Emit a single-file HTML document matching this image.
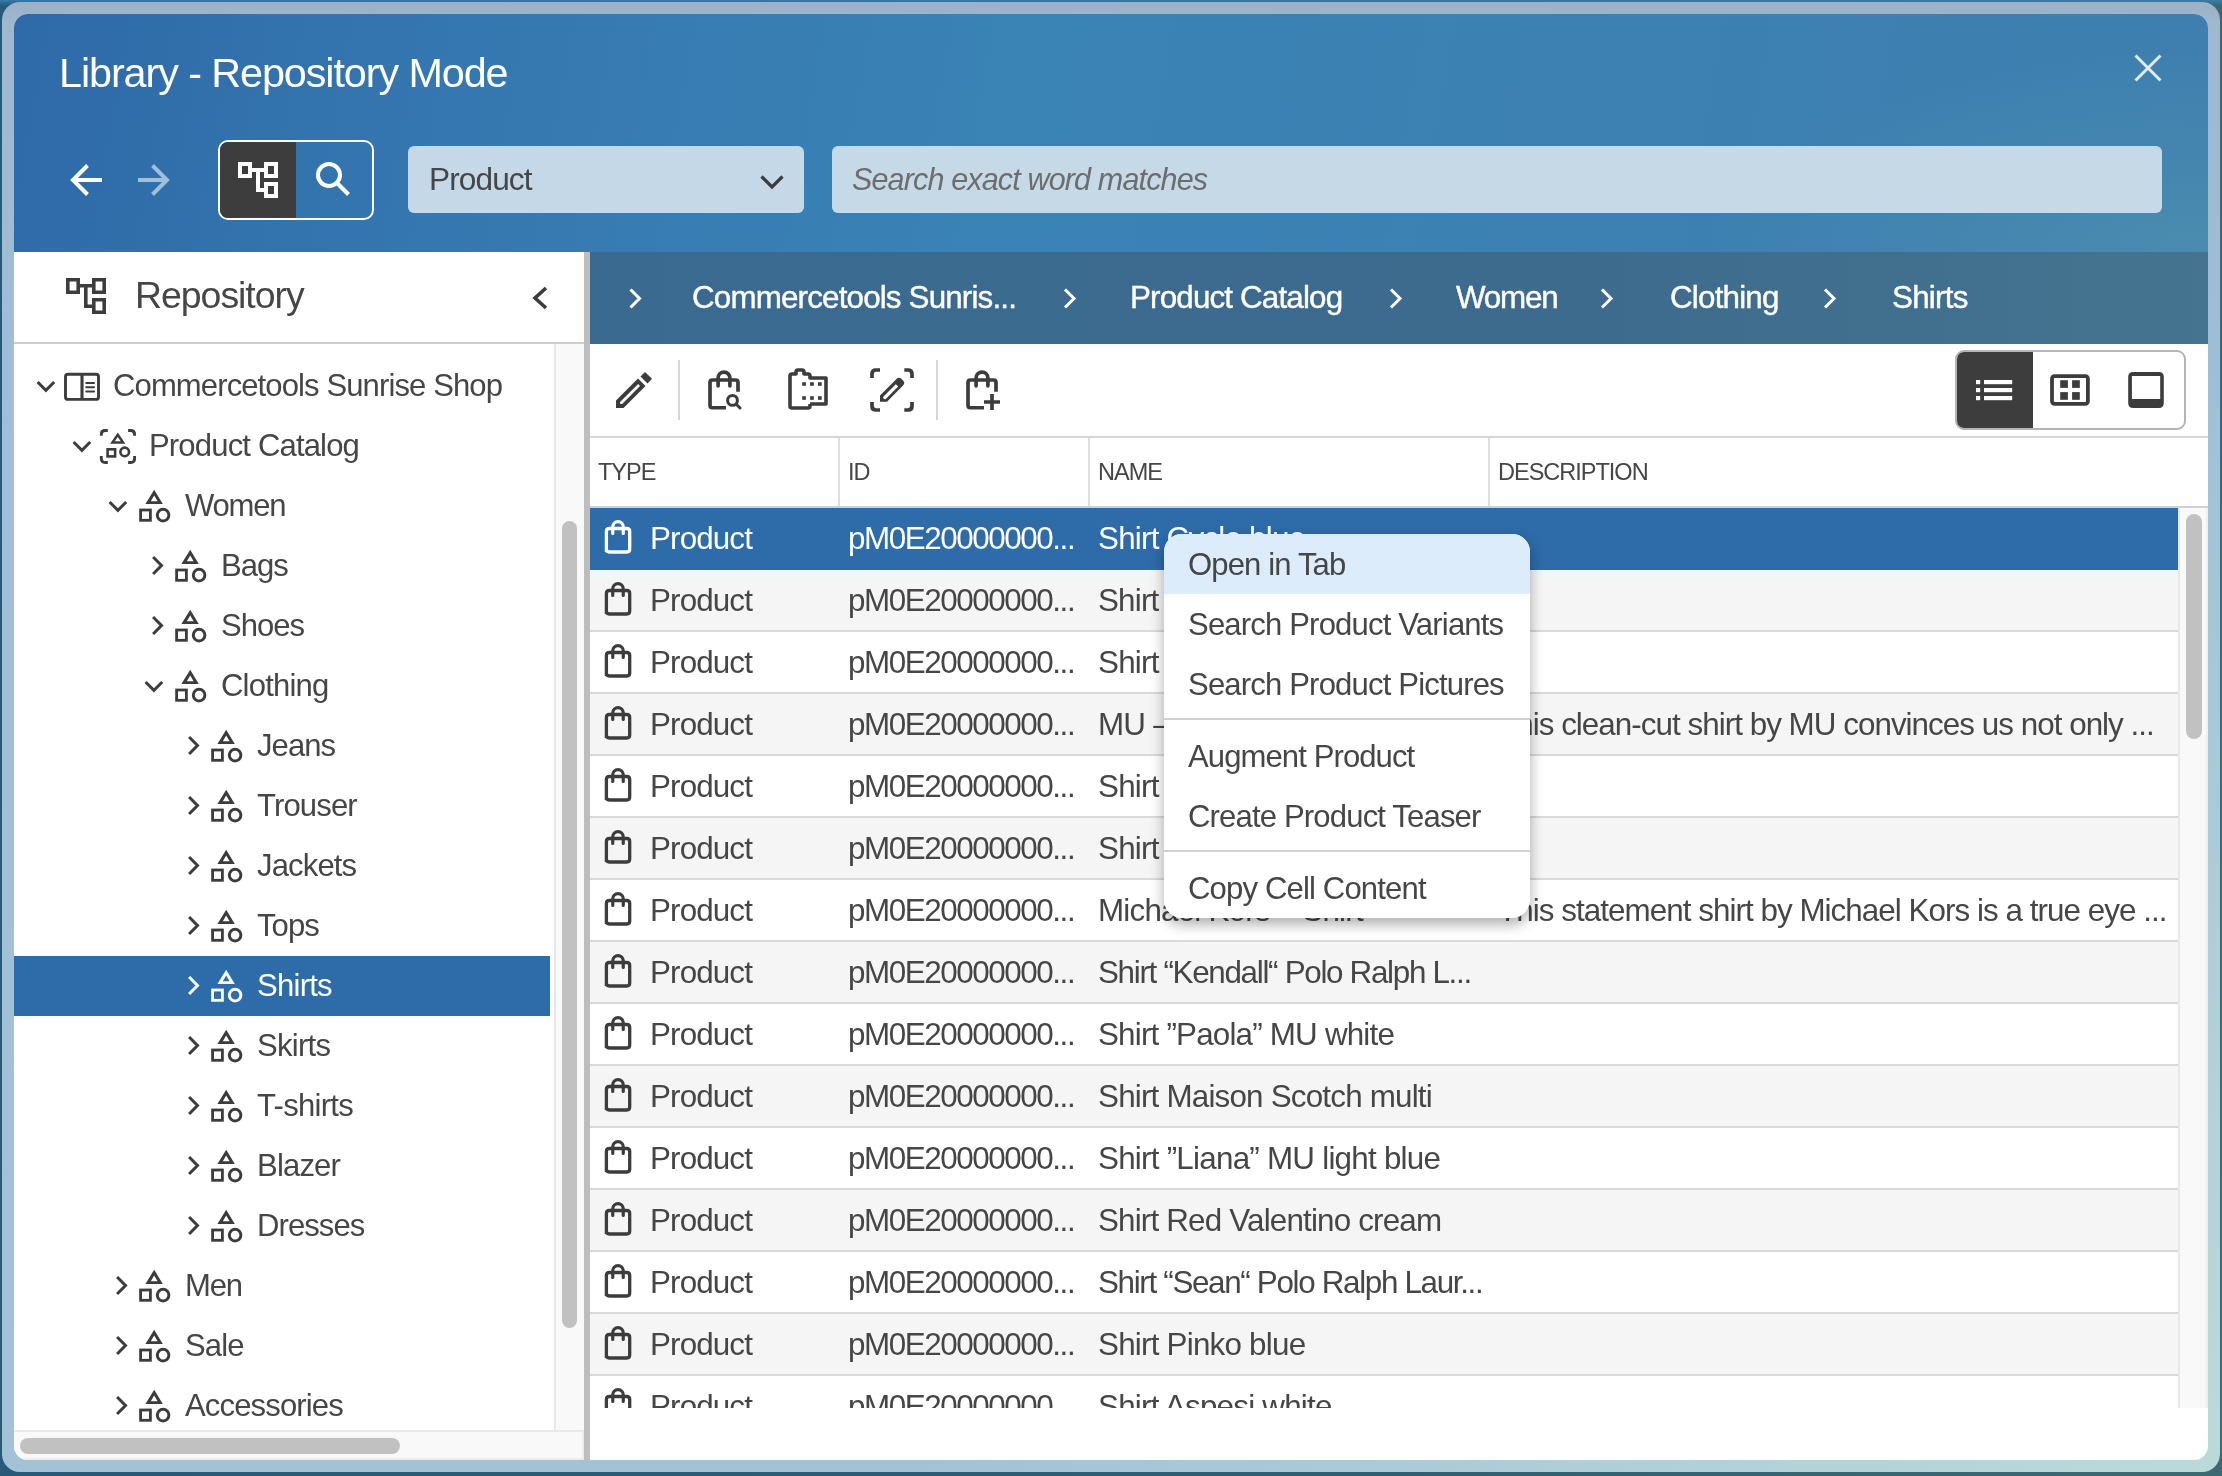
<!DOCTYPE html>
<html><head><meta charset="utf-8"><style>
*{margin:0;padding:0;box-sizing:border-box}
html,body{width:2222px;height:1476px;overflow:hidden}
body{position:relative;background:linear-gradient(180deg,rgba(60,125,175,0.9) 0px,rgba(60,125,175,0) 6px),linear-gradient(100deg,#28587a 0%,#2f5d72 60%,#3d6a72 100%);font-family:"Liberation Sans",sans-serif}
.t{position:absolute;white-space:nowrap;will-change:transform}
.box{position:absolute}
.ov{position:absolute;left:0;top:0;pointer-events:none}
#frame{position:absolute;left:2px;top:2px;width:2218px;height:1470px;border-radius:18px;background:linear-gradient(180deg,rgba(150,160,175,0.3) 0px,rgba(150,160,175,0) 20px),radial-gradient(ellipse 1300px 1100px at 100% 100%,rgba(186,218,218,1),rgba(186,218,218,0)),linear-gradient(180deg,#9db8cf 0%,#a0bfd6 30%,#a3c2d6 100%)}
#dlg{position:absolute;left:14px;top:14px;width:2194px;height:1446px;border-radius:14px;overflow:hidden;background:#fff}
#hdr{position:absolute;left:0;top:0;width:2194px;height:238px;background:radial-gradient(ellipse 500px 200px at 100% 100%,rgba(85,150,175,0.55),rgba(85,150,175,0) 100%),linear-gradient(100deg,#2e6aa8 0%,#3577b0 20%,#3a83b5 45%,#3c81b2 70%,#3e7faf 100%)}
</style></head><body>
<div id="frame"></div>
<div id="dlg">
 <div id="hdr"></div>
 <!-- left panel header border -->
 <div class="box" style="left:0;top:328px;width:570px;height:2px;background:#cfcfcf"></div>
 <!-- tree v scroll track -->
 <div class="box" style="left:540px;top:330px;width:30px;height:1086px;background:#f9f9f9;border-left:2px solid #e8e8e8"></div>
 <div class="box" style="left:548px;top:507px;width:15px;height:807px;background:#c1c1c1;border-radius:8px"></div>
 <!-- tree h scroll -->
 <div class="box" style="left:0;top:1416px;width:570px;height:30px;background:#f9f9f9;border-top:2px solid #e8e8e8;border-bottom:2px solid #ececec;border-right:2px solid #ececec"></div>
 <div class="box" style="left:6px;top:1424px;width:380px;height:16px;background:#c1c1c1;border-radius:8px"></div>
 <!-- splitter -->
 <div class="box" style="left:570px;top:238px;width:6px;height:1208px;background:#bdbdbd"></div>
 <!-- breadcrumb bar -->
 <div class="box" style="left:576px;top:238px;width:1618px;height:92px;background:linear-gradient(90deg,#3a6a90,#3d6b8e 60%,#44748f)"></div>
 <!-- toolbar bottom border -->
 <div class="box" style="left:576px;top:422px;width:1618px;height:2px;background:#d6d6d6"></div>
 <!-- table header -->
 <div class="box" style="left:576px;top:492px;width:1618px;height:2px;background:#d0d0d0"></div>
 <div class="box" style="left:824px;top:424px;width:2px;height:68px;background:#dedede"></div>
 <div class="box" style="left:1074px;top:424px;width:2px;height:68px;background:#dedede"></div>
 <div class="box" style="left:1474px;top:424px;width:2px;height:68px;background:#dedede"></div>
 <!-- table v scroll -->
 <div class="box" style="left:2164px;top:494px;width:30px;height:900px;background:#f9f9f9;border-left:2px solid #e8e8e8;border-right:2px solid #efefef"></div>
 <div class="box" style="left:2172px;top:500px;width:16px;height:225px;background:#c1c1c1;border-radius:8px"></div>
</div>
<div class="box" style="left:590px;top:508px;width:1588px;height:900px;overflow:hidden">
<div class="box" style="left:0;top:0px;width:1588px;height:62px;background:#2e6ba9;border-bottom:2px solid #2e6ba9"></div>
<div class="t " style="left:60px;top:14.84px;font-size:31.38px;line-height:31.38px;letter-spacing:-0.874px;color:#ffffff;">Product</div>
<div class="t " style="left:258px;top:14.84px;font-size:31.38px;line-height:31.38px;letter-spacing:-1.435px;color:#ffffff;">pM0E20000000...</div>
<div class="t " style="left:508px;top:14.84px;font-size:31.38px;line-height:31.38px;letter-spacing:-0.777px;color:#ffffff;">Shirt Cycle blue</div>
<div class="box" style="left:0;top:62px;width:1588px;height:62px;background:#f5f5f5;border-bottom:2px solid #d9d9d9"></div>
<div class="t " style="left:60px;top:76.84px;font-size:31.38px;line-height:31.38px;letter-spacing:-0.874px;color:#464646;">Product</div>
<div class="t " style="left:258px;top:76.84px;font-size:31.38px;line-height:31.38px;letter-spacing:-1.435px;color:#464646;">pM0E20000000...</div>
<div class="t " style="left:508px;top:76.84px;font-size:31.38px;line-height:31.38px;letter-spacing:-0.807px;color:#464646;">Shirt “Leonie” MU white</div>
<div class="box" style="left:0;top:124px;width:1588px;height:62px;background:#ffffff;border-bottom:2px solid #d9d9d9"></div>
<div class="t " style="left:60px;top:138.84px;font-size:31.38px;line-height:31.38px;letter-spacing:-0.874px;color:#464646;">Product</div>
<div class="t " style="left:258px;top:138.84px;font-size:31.38px;line-height:31.38px;letter-spacing:-1.435px;color:#464646;">pM0E20000000...</div>
<div class="t " style="left:508px;top:138.84px;font-size:31.38px;line-height:31.38px;letter-spacing:-0.790px;color:#464646;">Shirt “Selina” MU blue</div>
<div class="box" style="left:0;top:186px;width:1588px;height:62px;background:#f5f5f5;border-bottom:2px solid #d9d9d9"></div>
<div class="t " style="left:60px;top:200.84px;font-size:31.38px;line-height:31.38px;letter-spacing:-0.874px;color:#464646;">Product</div>
<div class="t " style="left:258px;top:200.84px;font-size:31.38px;line-height:31.38px;letter-spacing:-1.435px;color:#464646;">pM0E20000000...</div>
<div class="t " style="left:508px;top:200.84px;font-size:31.38px;line-height:31.38px;letter-spacing:-0.785px;color:#464646;">MU – Shirt “Ottavia”</div>
<div class="t " style="left:908px;top:200.84px;font-size:31.38px;line-height:31.38px;letter-spacing:-0.969px;color:#464646;">This clean-cut shirt by MU convinces us not only ...</div>
<div class="box" style="left:0;top:248px;width:1588px;height:62px;background:#ffffff;border-bottom:2px solid #d9d9d9"></div>
<div class="t " style="left:60px;top:262.84px;font-size:31.38px;line-height:31.38px;letter-spacing:-0.874px;color:#464646;">Product</div>
<div class="t " style="left:258px;top:262.84px;font-size:31.38px;line-height:31.38px;letter-spacing:-1.435px;color:#464646;">pM0E20000000...</div>
<div class="t " style="left:508px;top:262.84px;font-size:31.38px;line-height:31.38px;letter-spacing:-0.778px;color:#464646;">Shirt Seidensticker white</div>
<div class="box" style="left:0;top:310px;width:1588px;height:62px;background:#f5f5f5;border-bottom:2px solid #d9d9d9"></div>
<div class="t " style="left:60px;top:324.84px;font-size:31.38px;line-height:31.38px;letter-spacing:-0.874px;color:#464646;">Product</div>
<div class="t " style="left:258px;top:324.84px;font-size:31.38px;line-height:31.38px;letter-spacing:-1.435px;color:#464646;">pM0E20000000...</div>
<div class="t " style="left:508px;top:324.84px;font-size:31.38px;line-height:31.38px;letter-spacing:-0.792px;color:#464646;">Shirt Red Valentino white</div>
<div class="box" style="left:0;top:372px;width:1588px;height:62px;background:#ffffff;border-bottom:2px solid #d9d9d9"></div>
<div class="t " style="left:60px;top:386.84px;font-size:31.38px;line-height:31.38px;letter-spacing:-0.874px;color:#464646;">Product</div>
<div class="t " style="left:258px;top:386.84px;font-size:31.38px;line-height:31.38px;letter-spacing:-1.435px;color:#464646;">pM0E20000000...</div>
<div class="t " style="left:508px;top:386.84px;font-size:31.38px;line-height:31.38px;letter-spacing:-0.795px;color:#464646;">Michael Kors – Shirt</div>
<div class="t " style="left:908px;top:386.84px;font-size:31.38px;line-height:31.38px;letter-spacing:-0.955px;color:#464646;">This statement shirt by Michael Kors is a true eye ...</div>
<div class="box" style="left:0;top:434px;width:1588px;height:62px;background:#f5f5f5;border-bottom:2px solid #d9d9d9"></div>
<div class="t " style="left:60px;top:448.84px;font-size:31.38px;line-height:31.38px;letter-spacing:-0.874px;color:#464646;">Product</div>
<div class="t " style="left:258px;top:448.84px;font-size:31.38px;line-height:31.38px;letter-spacing:-1.435px;color:#464646;">pM0E20000000...</div>
<div class="t " style="left:508px;top:448.84px;font-size:31.38px;line-height:31.38px;letter-spacing:-1.305px;color:#464646;">Shirt “Kendall“ Polo Ralph L...</div>
<div class="box" style="left:0;top:496px;width:1588px;height:62px;background:#ffffff;border-bottom:2px solid #d9d9d9"></div>
<div class="t " style="left:60px;top:510.84px;font-size:31.38px;line-height:31.38px;letter-spacing:-0.874px;color:#464646;">Product</div>
<div class="t " style="left:258px;top:510.84px;font-size:31.38px;line-height:31.38px;letter-spacing:-1.435px;color:#464646;">pM0E20000000...</div>
<div class="t " style="left:508px;top:510.84px;font-size:31.38px;line-height:31.38px;letter-spacing:-0.807px;color:#464646;">Shirt ”Paola” MU white</div>
<div class="box" style="left:0;top:558px;width:1588px;height:62px;background:#f5f5f5;border-bottom:2px solid #d9d9d9"></div>
<div class="t " style="left:60px;top:572.84px;font-size:31.38px;line-height:31.38px;letter-spacing:-0.874px;color:#464646;">Product</div>
<div class="t " style="left:258px;top:572.84px;font-size:31.38px;line-height:31.38px;letter-spacing:-1.435px;color:#464646;">pM0E20000000...</div>
<div class="t " style="left:508px;top:572.84px;font-size:31.38px;line-height:31.38px;letter-spacing:-0.801px;color:#464646;">Shirt Maison Scotch multi</div>
<div class="box" style="left:0;top:620px;width:1588px;height:62px;background:#ffffff;border-bottom:2px solid #d9d9d9"></div>
<div class="t " style="left:60px;top:634.84px;font-size:31.38px;line-height:31.38px;letter-spacing:-0.874px;color:#464646;">Product</div>
<div class="t " style="left:258px;top:634.84px;font-size:31.38px;line-height:31.38px;letter-spacing:-1.435px;color:#464646;">pM0E20000000...</div>
<div class="t " style="left:508px;top:634.84px;font-size:31.38px;line-height:31.38px;letter-spacing:-0.760px;color:#464646;">Shirt ”Liana” MU light blue</div>
<div class="box" style="left:0;top:682px;width:1588px;height:62px;background:#f5f5f5;border-bottom:2px solid #d9d9d9"></div>
<div class="t " style="left:60px;top:696.84px;font-size:31.38px;line-height:31.38px;letter-spacing:-0.874px;color:#464646;">Product</div>
<div class="t " style="left:258px;top:696.84px;font-size:31.38px;line-height:31.38px;letter-spacing:-1.435px;color:#464646;">pM0E20000000...</div>
<div class="t " style="left:508px;top:696.84px;font-size:31.38px;line-height:31.38px;letter-spacing:-0.824px;color:#464646;">Shirt Red Valentino cream</div>
<div class="box" style="left:0;top:744px;width:1588px;height:62px;background:#ffffff;border-bottom:2px solid #d9d9d9"></div>
<div class="t " style="left:60px;top:758.84px;font-size:31.38px;line-height:31.38px;letter-spacing:-0.874px;color:#464646;">Product</div>
<div class="t " style="left:258px;top:758.84px;font-size:31.38px;line-height:31.38px;letter-spacing:-1.435px;color:#464646;">pM0E20000000...</div>
<div class="t " style="left:508px;top:758.84px;font-size:31.38px;line-height:31.38px;letter-spacing:-1.327px;color:#464646;">Shirt “Sean“ Polo Ralph Laur...</div>
<div class="box" style="left:0;top:806px;width:1588px;height:62px;background:#f5f5f5;border-bottom:2px solid #d9d9d9"></div>
<div class="t " style="left:60px;top:820.84px;font-size:31.38px;line-height:31.38px;letter-spacing:-0.874px;color:#464646;">Product</div>
<div class="t " style="left:258px;top:820.84px;font-size:31.38px;line-height:31.38px;letter-spacing:-1.435px;color:#464646;">pM0E20000000...</div>
<div class="t " style="left:508px;top:820.84px;font-size:31.38px;line-height:31.38px;letter-spacing:-0.777px;color:#464646;">Shirt Pinko blue</div>
<div class="box" style="left:0;top:868px;width:1588px;height:62px;background:#ffffff;border-bottom:2px solid #d9d9d9"></div>
<div class="t " style="left:60px;top:882.84px;font-size:31.38px;line-height:31.38px;letter-spacing:-0.874px;color:#464646;">Product</div>
<div class="t " style="left:258px;top:882.84px;font-size:31.38px;line-height:31.38px;letter-spacing:-1.435px;color:#464646;">pM0E20000000...</div>
<div class="t " style="left:508px;top:882.84px;font-size:31.38px;line-height:31.38px;letter-spacing:-0.779px;color:#464646;">Shirt Aspesi white</div>

<svg class="ov" width="1588" height="900" viewBox="0 0 1588 900"><path d="M16.399999999999977 44 V23.5 Q16.399999999999977 20.5 19.399999999999977 20.5 H36.700000000000045 Q39.700000000000045 20.5 39.700000000000045 23.5 V41 Q39.700000000000045 44 36.700000000000045 44 H19.399999999999977 Q16.399999999999977 44 16.399999999999977 41 Z" stroke="#ffffff" stroke-width="3.3" fill="none"/><path d="M22.75 25.5 V18.850000000000023 A5.25 5.25 0 0 1 33.25 18.850000000000023 V25.5" stroke="#ffffff" stroke-width="3.2" fill="none" stroke-linecap="round"/><path d="M16.399999999999977 106 V85.5 Q16.399999999999977 82.5 19.399999999999977 82.5 H36.700000000000045 Q39.700000000000045 82.5 39.700000000000045 85.5 V103 Q39.700000000000045 106 36.700000000000045 106 H19.399999999999977 Q16.399999999999977 106 16.399999999999977 103 Z" stroke="#3c3c3c" stroke-width="3.3" fill="none"/><path d="M22.75 87.5 V80.85000000000002 A5.25 5.25 0 0 1 33.25 80.85000000000002 V87.5" stroke="#3c3c3c" stroke-width="3.2" fill="none" stroke-linecap="round"/><path d="M16.399999999999977 168 V147.5 Q16.399999999999977 144.5 19.399999999999977 144.5 H36.700000000000045 Q39.700000000000045 144.5 39.700000000000045 147.5 V165 Q39.700000000000045 168 36.700000000000045 168 H19.399999999999977 Q16.399999999999977 168 16.399999999999977 165 Z" stroke="#3c3c3c" stroke-width="3.3" fill="none"/><path d="M22.75 149.5 V142.85000000000002 A5.25 5.25 0 0 1 33.25 142.85000000000002 V149.5" stroke="#3c3c3c" stroke-width="3.2" fill="none" stroke-linecap="round"/><path d="M16.399999999999977 230 V209.5 Q16.399999999999977 206.5 19.399999999999977 206.5 H36.700000000000045 Q39.700000000000045 206.5 39.700000000000045 209.5 V227 Q39.700000000000045 230 36.700000000000045 230 H19.399999999999977 Q16.399999999999977 230 16.399999999999977 227 Z" stroke="#3c3c3c" stroke-width="3.3" fill="none"/><path d="M22.75 211.5 V204.85000000000002 A5.25 5.25 0 0 1 33.25 204.85000000000002 V211.5" stroke="#3c3c3c" stroke-width="3.2" fill="none" stroke-linecap="round"/><path d="M16.399999999999977 292 V271.5 Q16.399999999999977 268.5 19.399999999999977 268.5 H36.700000000000045 Q39.700000000000045 268.5 39.700000000000045 271.5 V289 Q39.700000000000045 292 36.700000000000045 292 H19.399999999999977 Q16.399999999999977 292 16.399999999999977 289 Z" stroke="#3c3c3c" stroke-width="3.3" fill="none"/><path d="M22.75 273.5 V266.85 A5.25 5.25 0 0 1 33.25 266.85 V273.5" stroke="#3c3c3c" stroke-width="3.2" fill="none" stroke-linecap="round"/><path d="M16.399999999999977 354 V333.5 Q16.399999999999977 330.5 19.399999999999977 330.5 H36.700000000000045 Q39.700000000000045 330.5 39.700000000000045 333.5 V351 Q39.700000000000045 354 36.700000000000045 354 H19.399999999999977 Q16.399999999999977 354 16.399999999999977 351 Z" stroke="#3c3c3c" stroke-width="3.3" fill="none"/><path d="M22.75 335.5 V328.85 A5.25 5.25 0 0 1 33.25 328.85 V335.5" stroke="#3c3c3c" stroke-width="3.2" fill="none" stroke-linecap="round"/><path d="M16.399999999999977 416 V395.5 Q16.399999999999977 392.5 19.399999999999977 392.5 H36.700000000000045 Q39.700000000000045 392.5 39.700000000000045 395.5 V413 Q39.700000000000045 416 36.700000000000045 416 H19.399999999999977 Q16.399999999999977 416 16.399999999999977 413 Z" stroke="#3c3c3c" stroke-width="3.3" fill="none"/><path d="M22.75 397.5 V390.85 A5.25 5.25 0 0 1 33.25 390.85 V397.5" stroke="#3c3c3c" stroke-width="3.2" fill="none" stroke-linecap="round"/><path d="M16.399999999999977 478 V457.5 Q16.399999999999977 454.5 19.399999999999977 454.5 H36.700000000000045 Q39.700000000000045 454.5 39.700000000000045 457.5 V475 Q39.700000000000045 478 36.700000000000045 478 H19.399999999999977 Q16.399999999999977 478 16.399999999999977 475 Z" stroke="#3c3c3c" stroke-width="3.3" fill="none"/><path d="M22.75 459.5 V452.85 A5.25 5.25 0 0 1 33.25 452.85 V459.5" stroke="#3c3c3c" stroke-width="3.2" fill="none" stroke-linecap="round"/><path d="M16.399999999999977 540 V519.5 Q16.399999999999977 516.5 19.399999999999977 516.5 H36.700000000000045 Q39.700000000000045 516.5 39.700000000000045 519.5 V537 Q39.700000000000045 540 36.700000000000045 540 H19.399999999999977 Q16.399999999999977 540 16.399999999999977 537 Z" stroke="#3c3c3c" stroke-width="3.3" fill="none"/><path d="M22.75 521.5 V514.85 A5.25 5.25 0 0 1 33.25 514.85 V521.5" stroke="#3c3c3c" stroke-width="3.2" fill="none" stroke-linecap="round"/><path d="M16.399999999999977 602 V581.5 Q16.399999999999977 578.5 19.399999999999977 578.5 H36.700000000000045 Q39.700000000000045 578.5 39.700000000000045 581.5 V599 Q39.700000000000045 602 36.700000000000045 602 H19.399999999999977 Q16.399999999999977 602 16.399999999999977 599 Z" stroke="#3c3c3c" stroke-width="3.3" fill="none"/><path d="M22.75 583.5 V576.85 A5.25 5.25 0 0 1 33.25 576.85 V583.5" stroke="#3c3c3c" stroke-width="3.2" fill="none" stroke-linecap="round"/><path d="M16.399999999999977 664 V643.5 Q16.399999999999977 640.5 19.399999999999977 640.5 H36.700000000000045 Q39.700000000000045 640.5 39.700000000000045 643.5 V661 Q39.700000000000045 664 36.700000000000045 664 H19.399999999999977 Q16.399999999999977 664 16.399999999999977 661 Z" stroke="#3c3c3c" stroke-width="3.3" fill="none"/><path d="M22.75 645.5 V638.85 A5.25 5.25 0 0 1 33.25 638.85 V645.5" stroke="#3c3c3c" stroke-width="3.2" fill="none" stroke-linecap="round"/><path d="M16.399999999999977 726 V705.5 Q16.399999999999977 702.5 19.399999999999977 702.5 H36.700000000000045 Q39.700000000000045 702.5 39.700000000000045 705.5 V723 Q39.700000000000045 726 36.700000000000045 726 H19.399999999999977 Q16.399999999999977 726 16.399999999999977 723 Z" stroke="#3c3c3c" stroke-width="3.3" fill="none"/><path d="M22.75 707.5 V700.85 A5.25 5.25 0 0 1 33.25 700.85 V707.5" stroke="#3c3c3c" stroke-width="3.2" fill="none" stroke-linecap="round"/><path d="M16.399999999999977 788 V767.5 Q16.399999999999977 764.5 19.399999999999977 764.5 H36.700000000000045 Q39.700000000000045 764.5 39.700000000000045 767.5 V785 Q39.700000000000045 788 36.700000000000045 788 H19.399999999999977 Q16.399999999999977 788 16.399999999999977 785 Z" stroke="#3c3c3c" stroke-width="3.3" fill="none"/><path d="M22.75 769.5 V762.85 A5.25 5.25 0 0 1 33.25 762.85 V769.5" stroke="#3c3c3c" stroke-width="3.2" fill="none" stroke-linecap="round"/><path d="M16.399999999999977 850 V829.5 Q16.399999999999977 826.5 19.399999999999977 826.5 H36.700000000000045 Q39.700000000000045 826.5 39.700000000000045 829.5 V847 Q39.700000000000045 850 36.700000000000045 850 H19.399999999999977 Q16.399999999999977 850 16.399999999999977 847 Z" stroke="#3c3c3c" stroke-width="3.3" fill="none"/><path d="M22.75 831.5 V824.85 A5.25 5.25 0 0 1 33.25 824.85 V831.5" stroke="#3c3c3c" stroke-width="3.2" fill="none" stroke-linecap="round"/><path d="M16.399999999999977 912 V891.5 Q16.399999999999977 888.5 19.399999999999977 888.5 H36.700000000000045 Q39.700000000000045 888.5 39.700000000000045 891.5 V909 Q39.700000000000045 912 36.700000000000045 912 H19.399999999999977 Q16.399999999999977 912 16.399999999999977 909 Z" stroke="#3c3c3c" stroke-width="3.3" fill="none"/><path d="M22.75 893.5 V886.85 A5.25 5.25 0 0 1 33.25 886.85 V893.5" stroke="#3c3c3c" stroke-width="3.2" fill="none" stroke-linecap="round"/></svg>
</div>
<div class="t " style="left:59px;top:53.01px;font-size:41.34px;line-height:41.34px;letter-spacing:-1.077px;color:#ffffff;">Library - Repository Mode</div>
<div class="box" style="left:218px;top:140px;width:156px;height:80px;border:2px solid #fff;border-radius:10px;overflow:hidden"><div style="position:absolute;left:0;top:0;width:76px;height:76px;background:#3d3d3d"></div></div>
<div class="box" style="left:408px;top:146px;width:396px;height:67px;background:#c4d8e7;border-radius:6px"></div>
<div class="t " style="left:429px;top:164.26px;font-size:31.59px;line-height:31.59px;letter-spacing:-0.880px;color:#464646;">Product</div>
<div class="box" style="left:832px;top:146px;width:1330px;height:67px;background:#c5d9e7;border-radius:6px"></div>
<div class="t " style="left:852px;top:163.66px;font-size:30.53px;line-height:30.53px;letter-spacing:-0.853px;color:#6d6d6d;font-style:italic">Search exact word matches</div>
<div class="t " style="left:134.5px;top:277.33px;font-size:37.42px;line-height:37.42px;letter-spacing:-1.012px;color:#464646;">Repository</div>
<div class="t " style="left:113px;top:369.91px;font-size:31.06px;line-height:31.06px;letter-spacing:-0.898px;color:#464646;">Commercetools Sunrise Shop</div>
<div class="t " style="left:149px;top:429.91px;font-size:31.06px;line-height:31.06px;letter-spacing:-0.840px;color:#464646;">Product Catalog</div>
<div class="t " style="left:185px;top:489.91px;font-size:31.06px;line-height:31.06px;letter-spacing:-1.205px;color:#464646;">Women</div>
<div class="t " style="left:221px;top:549.91px;font-size:31.06px;line-height:31.06px;letter-spacing:-1.002px;color:#464646;">Bags</div>
<div class="t " style="left:221px;top:609.91px;font-size:31.06px;line-height:31.06px;letter-spacing:-0.997px;color:#464646;">Shoes</div>
<div class="t " style="left:221px;top:669.91px;font-size:31.06px;line-height:31.06px;letter-spacing:-0.806px;color:#464646;">Clothing</div>
<div class="t " style="left:257px;top:729.91px;font-size:31.06px;line-height:31.06px;letter-spacing:-0.938px;color:#464646;">Jeans</div>
<div class="t " style="left:257px;top:789.91px;font-size:31.06px;line-height:31.06px;letter-spacing:-0.856px;color:#464646;">Trouser</div>
<div class="t " style="left:257px;top:849.91px;font-size:31.06px;line-height:31.06px;letter-spacing:-0.851px;color:#464646;">Jackets</div>
<div class="t " style="left:257px;top:909.91px;font-size:31.06px;line-height:31.06px;letter-spacing:-0.928px;color:#464646;">Tops</div>
<div class="box" style="left:14px;top:956px;width:536px;height:60px;background:#2e6ba9"></div>
<div class="t " style="left:257px;top:969.91px;font-size:31.06px;line-height:31.06px;letter-spacing:-0.749px;color:#ffffff;">Shirts</div>
<div class="t " style="left:257px;top:1029.91px;font-size:31.06px;line-height:31.06px;letter-spacing:-0.733px;color:#464646;">Skirts</div>
<div class="t " style="left:257px;top:1089.91px;font-size:31.06px;line-height:31.06px;letter-spacing:-0.720px;color:#464646;">T-shirts</div>
<div class="t " style="left:257px;top:1149.91px;font-size:31.06px;line-height:31.06px;letter-spacing:-0.830px;color:#464646;">Blazer</div>
<div class="t " style="left:257px;top:1209.91px;font-size:31.06px;line-height:31.06px;letter-spacing:-0.921px;color:#464646;">Dresses</div>
<div class="t " style="left:185px;top:1269.91px;font-size:31.06px;line-height:31.06px;letter-spacing:-1.140px;color:#464646;">Men</div>
<div class="t " style="left:185px;top:1329.91px;font-size:31.06px;line-height:31.06px;letter-spacing:-0.880px;color:#464646;">Sale</div>
<div class="t " style="left:185px;top:1389.91px;font-size:31.06px;line-height:31.06px;letter-spacing:-0.861px;color:#464646;">Accessories</div>
<div class="t " style="left:692px;top:281.84px;font-size:31.38px;line-height:31.38px;letter-spacing:-0.845px;color:#ffffff;-webkit-text-stroke:0.4px #fff">Commercetools Sunris...</div>
<div class="t " style="left:1130px;top:281.84px;font-size:31.38px;line-height:31.38px;letter-spacing:-0.849px;color:#ffffff;-webkit-text-stroke:0.4px #fff">Product Catalog</div>
<div class="t " style="left:1456px;top:281.84px;font-size:31.38px;line-height:31.38px;letter-spacing:-1.217px;color:#ffffff;-webkit-text-stroke:0.4px #fff">Women</div>
<div class="t " style="left:1670px;top:281.84px;font-size:31.38px;line-height:31.38px;letter-spacing:-0.814px;color:#ffffff;-webkit-text-stroke:0.4px #fff">Clothing</div>
<div class="t " style="left:1892px;top:281.84px;font-size:31.38px;line-height:31.38px;letter-spacing:-0.757px;color:#ffffff;-webkit-text-stroke:0.4px #fff">Shirts</div>
<div class="box" style="left:1955px;top:350px;width:231px;height:80px;border:2px solid #b4b4b4;border-radius:9px;overflow:hidden"><div style="position:absolute;left:0;top:0;width:76px;height:76px;background:#3d3d3d"></div></div>
<div class="t " style="left:598px;top:461.31px;font-size:23.50px;line-height:23.50px;letter-spacing:-1.000px;color:#464646;">TYPE</div>
<div class="t " style="left:848px;top:461.31px;font-size:23.50px;line-height:23.50px;letter-spacing:-1.000px;color:#464646;">ID</div>
<div class="t " style="left:1098px;top:461.31px;font-size:23.50px;line-height:23.50px;letter-spacing:-1.000px;color:#464646;">NAME</div>
<div class="t " style="left:1498px;top:461.31px;font-size:23.50px;line-height:23.50px;letter-spacing:-1.000px;color:#464646;">DESCRIPTION</div>

<svg class="ov" width="2222" height="1476" viewBox="0 0 2222 1476"><path d="M2135.5 55.5 L2160.5 80.5 M2160.5 55.5 L2135.5 80.5" stroke="#e2ecf4" stroke-width="3" fill="none"/><path d="M102 180 H73 M87.5 165.5 L73 180 L87.5 194.5" stroke="#fff" stroke-width="4" fill="none"/><path d="M138 180 H167 M152.5 165.5 L167 180 L152.5 194.5" stroke="#9fbfdb" stroke-width="4" fill="none"/><path fill-rule="nonzero" fill="#fff" d="M238 162 h14 v16 h-14 Z M242 166 v8 h6 v-8 Z M264 162 h14 v16 h-14 Z M268 166 v8 h6 v-8 Z M264 182 h14 v16 h-14 Z M268 186 v8 h6 v-8 Z M252 168 h12 v4 h-12 Z M256 172 h4 v16 h-4 Z M256 188 h8 v4 h-8 Z"/><circle cx="329" cy="175" r="11" stroke="#fff" stroke-width="4" fill="none"/><path d="M337.5 183.5 L348.5 194.5" stroke="#fff" stroke-width="4"/><path d="M761.5 176.5 L772 187 L782.5 176.5" stroke="#3c3c3c" stroke-width="3.2" fill="none"/><path fill-rule="nonzero" fill="#3d3d3d" d="M66 278 h14 v16 h-14 Z M69.6 281.6 v8.8 h6.8 v-8.8 Z M92 278 h14 v16 h-14 Z M95.6 281.6 v8.8 h6.8 v-8.8 Z M92 298 h14 v16 h-14 Z M95.6 301.6 v8.8 h6.8 v-8.8 Z M80 284 h12 v3.6 h-12 Z M84 287.6 h3.6 v16.8 h-3.6 Z M84 304.4 h8 v3.6 h-8 Z"/><path d="M546 288 L535 298 L546 308" stroke="#3c3c3c" stroke-width="3.6" fill="none"/><path d="M37.599999999999994 382 L45.9 390.3 L54.2 382" stroke="#3c3c3c" stroke-width="3" fill="none"/><rect x="65.5" y="374.2" width="33" height="25.2" rx="2.5" stroke="#3c3c3c" stroke-width="2.9" fill="none"/><path d="M82 374 V400" stroke="#3c3c3c" stroke-width="3.1"/><path d="M86.3 383 H94 M86.3 387.2 H94 M86.3 391.5 H94" stroke="#3c3c3c" stroke-width="2.1" stroke-linecap="round"/><path d="M73.60000000000001 442 L81.9 450.3 L90.2 442" stroke="#3c3c3c" stroke-width="3" fill="none"/><path d="M107.8 430.5 H105.3 Q101.3 430.5 101.3 434.5 V435.8 M128.1 430.5 H130.6 Q134.6 430.5 134.6 434.5 V435.8 M101.3 456.1 V458.5 Q101.3 462.5 105.3 462.5 H107.8 M134.6 456.1 V458.5 Q134.6 462.5 130.6 462.5 H128.1" stroke="#3c3c3c" stroke-width="2.9" fill="none"/><path d="M117.8 434.8 L123 442.4 H112.5 Z" stroke="#3c3c3c" stroke-width="2.5" fill="none"/><rect x="107.6" y="449.3" width="7.5" height="7.1" stroke="#3c3c3c" stroke-width="2.6" fill="none"/><circle cx="124.7" cy="451.9" r="4.3" stroke="#3c3c3c" stroke-width="2.6" fill="none"/><path d="M109.60000000000001 502 L117.9 510.3 L126.2 502" stroke="#3c3c3c" stroke-width="3" fill="none"/><path d="M154.2 489.7 L162.79999999999998 503.9 H145.39999999999998 Z M154.2 495.59999999999997 L150.79999999999998 501.2 H157.6 Z" fill="#3c3c3c" fill-rule="evenodd"/><rect x="140.6" y="510.0" width="9.8" height="10.3" stroke="#3c3c3c" stroke-width="2.8" fill="none"/><circle cx="163.1" cy="515.1" r="5.8" stroke="#3c3c3c" stroke-width="3" fill="none"/><path d="M153.1 557 L161.5 565.5 L153.1 574" stroke="#3c3c3c" stroke-width="3" fill="none"/><path d="M190.2 549.7 L198.79999999999998 563.9000000000001 H181.39999999999998 Z M190.2 555.6 L186.79999999999998 561.2 H193.6 Z" fill="#3c3c3c" fill-rule="evenodd"/><rect x="176.6" y="570.0" width="9.8" height="10.3" stroke="#3c3c3c" stroke-width="2.8" fill="none"/><circle cx="199.1" cy="575.1" r="5.8" stroke="#3c3c3c" stroke-width="3" fill="none"/><path d="M153.1 617 L161.5 625.5 L153.1 634" stroke="#3c3c3c" stroke-width="3" fill="none"/><path d="M190.2 609.7 L198.79999999999998 623.9000000000001 H181.39999999999998 Z M190.2 615.6 L186.79999999999998 621.2 H193.6 Z" fill="#3c3c3c" fill-rule="evenodd"/><rect x="176.6" y="630.0" width="9.8" height="10.3" stroke="#3c3c3c" stroke-width="2.8" fill="none"/><circle cx="199.1" cy="635.1" r="5.8" stroke="#3c3c3c" stroke-width="3" fill="none"/><path d="M145.6 682 L153.9 690.3 L162.20000000000002 682" stroke="#3c3c3c" stroke-width="3" fill="none"/><path d="M190.2 669.7 L198.79999999999998 683.9000000000001 H181.39999999999998 Z M190.2 675.6 L186.79999999999998 681.2 H193.6 Z" fill="#3c3c3c" fill-rule="evenodd"/><rect x="176.6" y="690.0" width="9.8" height="10.3" stroke="#3c3c3c" stroke-width="2.8" fill="none"/><circle cx="199.1" cy="695.1" r="5.8" stroke="#3c3c3c" stroke-width="3" fill="none"/><path d="M189.1 737 L197.5 745.5 L189.1 754" stroke="#3c3c3c" stroke-width="3" fill="none"/><path d="M226.2 729.7 L234.79999999999998 743.9000000000001 H217.39999999999998 Z M226.2 735.6 L222.79999999999998 741.2 H229.6 Z" fill="#3c3c3c" fill-rule="evenodd"/><rect x="212.6" y="750.0" width="9.8" height="10.3" stroke="#3c3c3c" stroke-width="2.8" fill="none"/><circle cx="235.1" cy="755.1" r="5.8" stroke="#3c3c3c" stroke-width="3" fill="none"/><path d="M189.1 797 L197.5 805.5 L189.1 814" stroke="#3c3c3c" stroke-width="3" fill="none"/><path d="M226.2 789.7 L234.79999999999998 803.9000000000001 H217.39999999999998 Z M226.2 795.6 L222.79999999999998 801.2 H229.6 Z" fill="#3c3c3c" fill-rule="evenodd"/><rect x="212.6" y="810.0" width="9.8" height="10.3" stroke="#3c3c3c" stroke-width="2.8" fill="none"/><circle cx="235.1" cy="815.1" r="5.8" stroke="#3c3c3c" stroke-width="3" fill="none"/><path d="M189.1 857 L197.5 865.5 L189.1 874" stroke="#3c3c3c" stroke-width="3" fill="none"/><path d="M226.2 849.7 L234.79999999999998 863.9000000000001 H217.39999999999998 Z M226.2 855.6 L222.79999999999998 861.2 H229.6 Z" fill="#3c3c3c" fill-rule="evenodd"/><rect x="212.6" y="870.0" width="9.8" height="10.3" stroke="#3c3c3c" stroke-width="2.8" fill="none"/><circle cx="235.1" cy="875.1" r="5.8" stroke="#3c3c3c" stroke-width="3" fill="none"/><path d="M189.1 917 L197.5 925.5 L189.1 934" stroke="#3c3c3c" stroke-width="3" fill="none"/><path d="M226.2 909.7 L234.79999999999998 923.9000000000001 H217.39999999999998 Z M226.2 915.6 L222.79999999999998 921.2 H229.6 Z" fill="#3c3c3c" fill-rule="evenodd"/><rect x="212.6" y="930.0" width="9.8" height="10.3" stroke="#3c3c3c" stroke-width="2.8" fill="none"/><circle cx="235.1" cy="935.1" r="5.8" stroke="#3c3c3c" stroke-width="3" fill="none"/><path d="M189.1 977 L197.5 985.5 L189.1 994" stroke="#ffffff" stroke-width="3" fill="none"/><path d="M226.2 969.7 L234.79999999999998 983.9000000000001 H217.39999999999998 Z M226.2 975.6 L222.79999999999998 981.2 H229.6 Z" fill="#ffffff" fill-rule="evenodd"/><rect x="212.6" y="990.0" width="9.8" height="10.3" stroke="#ffffff" stroke-width="2.8" fill="none"/><circle cx="235.1" cy="995.1" r="5.8" stroke="#ffffff" stroke-width="3" fill="none"/><path d="M189.1 1037 L197.5 1045.5 L189.1 1054" stroke="#3c3c3c" stroke-width="3" fill="none"/><path d="M226.2 1029.7 L234.79999999999998 1043.9 H217.39999999999998 Z M226.2 1035.6000000000001 L222.79999999999998 1041.2 H229.6 Z" fill="#3c3c3c" fill-rule="evenodd"/><rect x="212.6" y="1050.0" width="9.8" height="10.3" stroke="#3c3c3c" stroke-width="2.8" fill="none"/><circle cx="235.1" cy="1055.1000000000001" r="5.8" stroke="#3c3c3c" stroke-width="3" fill="none"/><path d="M189.1 1097 L197.5 1105.5 L189.1 1114" stroke="#3c3c3c" stroke-width="3" fill="none"/><path d="M226.2 1089.7 L234.79999999999998 1103.9 H217.39999999999998 Z M226.2 1095.6000000000001 L222.79999999999998 1101.2 H229.6 Z" fill="#3c3c3c" fill-rule="evenodd"/><rect x="212.6" y="1110.0" width="9.8" height="10.3" stroke="#3c3c3c" stroke-width="2.8" fill="none"/><circle cx="235.1" cy="1115.1000000000001" r="5.8" stroke="#3c3c3c" stroke-width="3" fill="none"/><path d="M189.1 1157 L197.5 1165.5 L189.1 1174" stroke="#3c3c3c" stroke-width="3" fill="none"/><path d="M226.2 1149.7 L234.79999999999998 1163.9 H217.39999999999998 Z M226.2 1155.6000000000001 L222.79999999999998 1161.2 H229.6 Z" fill="#3c3c3c" fill-rule="evenodd"/><rect x="212.6" y="1170.0" width="9.8" height="10.3" stroke="#3c3c3c" stroke-width="2.8" fill="none"/><circle cx="235.1" cy="1175.1000000000001" r="5.8" stroke="#3c3c3c" stroke-width="3" fill="none"/><path d="M189.1 1217 L197.5 1225.5 L189.1 1234" stroke="#3c3c3c" stroke-width="3" fill="none"/><path d="M226.2 1209.7 L234.79999999999998 1223.9 H217.39999999999998 Z M226.2 1215.6000000000001 L222.79999999999998 1221.2 H229.6 Z" fill="#3c3c3c" fill-rule="evenodd"/><rect x="212.6" y="1230.0" width="9.8" height="10.3" stroke="#3c3c3c" stroke-width="2.8" fill="none"/><circle cx="235.1" cy="1235.1000000000001" r="5.8" stroke="#3c3c3c" stroke-width="3" fill="none"/><path d="M117.1 1277 L125.5 1285.5 L117.1 1294" stroke="#3c3c3c" stroke-width="3" fill="none"/><path d="M154.2 1269.7 L162.79999999999998 1283.9 H145.39999999999998 Z M154.2 1275.6000000000001 L150.79999999999998 1281.2 H157.6 Z" fill="#3c3c3c" fill-rule="evenodd"/><rect x="140.6" y="1290.0" width="9.8" height="10.3" stroke="#3c3c3c" stroke-width="2.8" fill="none"/><circle cx="163.1" cy="1295.1000000000001" r="5.8" stroke="#3c3c3c" stroke-width="3" fill="none"/><path d="M117.1 1337 L125.5 1345.5 L117.1 1354" stroke="#3c3c3c" stroke-width="3" fill="none"/><path d="M154.2 1329.7 L162.79999999999998 1343.9 H145.39999999999998 Z M154.2 1335.6000000000001 L150.79999999999998 1341.2 H157.6 Z" fill="#3c3c3c" fill-rule="evenodd"/><rect x="140.6" y="1350.0" width="9.8" height="10.3" stroke="#3c3c3c" stroke-width="2.8" fill="none"/><circle cx="163.1" cy="1355.1000000000001" r="5.8" stroke="#3c3c3c" stroke-width="3" fill="none"/><path d="M117.1 1397 L125.5 1405.5 L117.1 1414" stroke="#3c3c3c" stroke-width="3" fill="none"/><path d="M154.2 1389.7 L162.79999999999998 1403.9 H145.39999999999998 Z M154.2 1395.6000000000001 L150.79999999999998 1401.2 H157.6 Z" fill="#3c3c3c" fill-rule="evenodd"/><rect x="140.6" y="1410.0" width="9.8" height="10.3" stroke="#3c3c3c" stroke-width="2.8" fill="none"/><circle cx="163.1" cy="1415.1000000000001" r="5.8" stroke="#3c3c3c" stroke-width="3" fill="none"/><path d="M630.5 289.5 L639.5 298.5 L630.5 307.5" stroke="#fff" stroke-width="3" fill="none"/><path d="M1065 289.5 L1074 298.5 L1065 307.5" stroke="#fff" stroke-width="3" fill="none"/><path d="M1391 289.5 L1400 298.5 L1391 307.5" stroke="#fff" stroke-width="3" fill="none"/><path d="M1602 289.5 L1611 298.5 L1602 307.5" stroke="#fff" stroke-width="3" fill="none"/><path d="M1825 289.5 L1834 298.5 L1825 307.5" stroke="#fff" stroke-width="3" fill="none"/><path fill-rule="evenodd" fill="#3c3c3c" d="M616 400.5 L638 378.5 L645.5 386 L623.5 408 L616 408 Z M619.8 402.2 L638.2 384 L640 386 L622.2 404 Q619.8 404.5 619.8 402.2 Z"/><path fill="#3c3c3c" d="M640.5 376.5 L645 372 L652 378.8 L647.5 383.5 Z"/><rect x="678" y="360" width="2" height="60" fill="#d6d6d6"/><rect x="936" y="360" width="2" height="60" fill="#d6d6d6"/><path d="M726 407.75 H712.5 Q710 407.75 710 405.25 V382.5 Q710 380 712.5 380 H735.5 Q738 380 738 382.5 V391.7" stroke="#3c3c3c" stroke-width="3.7" fill="none"/><path d="M718.1 385.8 V378 A5.9 5.9 0 0 1 729.9 378 V385.8" stroke="#3c3c3c" stroke-width="3.7" fill="none" stroke-linecap="round"/><circle cx="732.5" cy="400.4" r="4.9" stroke="#3c3c3c" stroke-width="3" fill="none"/><path d="M736 404 L740 408" stroke="#3c3c3c" stroke-width="3" stroke-linecap="round"/><path d="M984 407.75 H970.5 Q968 407.75 968 405.25 V382.5 Q968 380 970.5 380 H993.5 Q996 380 996 382.5 V391.7" stroke="#3c3c3c" stroke-width="3.7" fill="none"/><path d="M976.1 385.8 V378 A5.9 5.9 0 0 1 987.9 378 V385.8" stroke="#3c3c3c" stroke-width="3.7" fill="none" stroke-linecap="round"/><path d="M992 394 V410 M984 402 H1000" stroke="#3c3c3c" stroke-width="3.7"/><path d="M810 404 V406 Q810 408 808 408 H792 Q790 408 790 406 V376 Q790 374 792 374 H796 V372 Q796 370 798 370 H802 Q804 370 804 372 V374 H808 Q810 374 810 376 V378 H826 V404 H810" stroke="#3c3c3c" stroke-width="3.6" fill="none" stroke-linejoin="round"/><rect x="802.2" y="382.2" width="3.7" height="3.6" fill="#3c3c3c"/><rect x="810.1" y="382.2" width="3.7" height="3.6" fill="#3c3c3c"/><rect x="818" y="382.2" width="3.7" height="3.6" fill="#3c3c3c"/><rect x="802.2" y="396.2" width="3.7" height="3.6" fill="#3c3c3c"/><rect x="810.1" y="396.2" width="3.7" height="3.6" fill="#3c3c3c"/><rect x="818" y="396.2" width="3.7" height="3.6" fill="#3c3c3c"/><path d="M880 370 H876 Q872 370 872 374 V378 M904.3 370 H908 Q912 370 912 374 V378 M872 402 V406 Q872 410 876 410 H880 M912 402 V406 Q912 410 908 410 H904.3" stroke="#3c3c3c" stroke-width="3.7" fill="none"/><path fill-rule="evenodd" fill="#3c3c3c" d="M880 395.5 L896.5 379 Q899 376.5 901.5 379 L903 380.5 Q905.5 383 903 385.5 L887 401.7 H880 Z M883 397 L895.8 384.2 L898.2 386.6 L885.5 399.3 Q883.3 399.6 883 397 Z"/><rect x="1976" y="380" width="4.2" height="4.2" fill="#fff"/><rect x="1984" y="380" width="28.2" height="4.2" fill="#fff"/><rect x="1976" y="388" width="4.2" height="4.2" fill="#fff"/><rect x="1984" y="388" width="28.2" height="4.2" fill="#fff"/><rect x="1976" y="396" width="4.2" height="4.2" fill="#fff"/><rect x="1984" y="396" width="28.2" height="4.2" fill="#fff"/><rect x="2052" y="376.1" width="35.9" height="27.7" rx="2.5" stroke="#3c3c3c" stroke-width="3.8" fill="none"/><rect x="2060.2" y="380.2" width="7.7" height="7.7" fill="#3c3c3c"/><rect x="2060.2" y="392.1" width="7.7" height="7.7" fill="#3c3c3c"/><rect x="2072.1" y="380.2" width="7.7" height="7.7" fill="#3c3c3c"/><rect x="2072.1" y="392.1" width="7.7" height="7.7" fill="#3c3c3c"/><path fill-rule="evenodd" fill="#3c3c3c" d="M2133.2 372 H2158.8 Q2163.8 372 2163.8 377 V402.9 Q2163.8 407.9 2158.8 407.9 H2133.2 Q2128.2 407.9 2128.2 402.9 V377 Q2128.2 372 2133.2 372 Z M2131.9 376 V399 H2160.2 V376 Z"/></svg>
<!-- context menu -->
<div class="box" style="left:1164px;top:534px;width:366px;height:384px;background:#fff;border-radius:18px;box-shadow:0 6px 14px rgba(0,0,0,0.33);overflow:hidden">
 <div class="box" style="left:0;top:0;width:366px;height:60px;background:#dcecfa"></div>
 <div class="box" style="left:0;top:184px;width:366px;height:2px;background:#d0d0d0"></div>
 <div class="box" style="left:0;top:316px;width:366px;height:2px;background:#d0d0d0"></div>
</div>
<div class="t " style="left:1188px;top:549.21px;font-size:31.06px;line-height:31.06px;letter-spacing:-0.859px;color:#464646;">Open in Tab</div>
<div class="t " style="left:1188px;top:609.21px;font-size:31.06px;line-height:31.06px;letter-spacing:-0.823px;color:#464646;">Search Product Variants</div>
<div class="t " style="left:1188px;top:669.21px;font-size:31.06px;line-height:31.06px;letter-spacing:-0.824px;color:#464646;">Search Product Pictures</div>
<div class="t " style="left:1188px;top:741.21px;font-size:31.06px;line-height:31.06px;letter-spacing:-0.905px;color:#464646;">Augment Product</div>
<div class="t " style="left:1188px;top:801.21px;font-size:31.06px;line-height:31.06px;letter-spacing:-0.836px;color:#464646;">Create Product Teaser</div>
<div class="t " style="left:1188px;top:873.21px;font-size:31.06px;line-height:31.06px;letter-spacing:-0.839px;color:#464646;">Copy Cell Content</div>

</body></html>
